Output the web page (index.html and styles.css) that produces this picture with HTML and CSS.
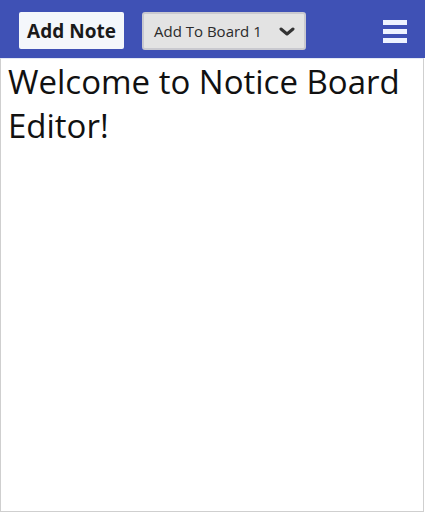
FILE: index.html
```html
<!DOCTYPE html>
<html>
<head>
<meta charset="utf-8">
<link rel="stylesheet" href="styles.css">
</head>
<body>
<header class="topbar">
  <button class="add-note">Add Note</button>
  <div class="board-select">
    <span class="board-label">Add To Board 1</span>
    <svg class="chevron" width="16" height="10" viewBox="0 0 16 10"><path d="M2 2 L8 7 L14 2" fill="none" stroke="#333" stroke-width="3" stroke-linecap="round" stroke-linejoin="round"/></svg>
  </div>
  <div class="menu">
    <span class="bar"></span>
    <span class="bar"></span>
    <span class="bar"></span>
  </div>
</header>
<main class="board">
  <h1 class="welcome">Welcome to Notice Board Editor!</h1>
</main>
</body>
</html>
```
FILE: styles.css
```css
html, body {
  margin: 0;
  padding: 0;
  height: 100%;
}
body {
  font-family: "Open Sans", "Noto Sans", sans-serif;
  background: #ffffff;
  display: flex;
  flex-direction: column;
}
.topbar {
  height: 58px;
  background: #3f51b5;
  display: flex;
  align-items: center;
  padding: 0 18px 0 19px;
  box-sizing: border-box;
  flex-shrink: 0;
}
.add-note {
  font-family: "Open Sans", sans-serif;
  font-weight: 700;
  font-size: 19px;
  color: #1a1a1a;
  background: #f4f7fb;
  border: none;
  border-radius: 2px;
  width: 105px;
  height: 37px;
  padding: 0;
  margin-top: 3px;
}
.board-select {
  margin-left: 18px;
  margin-top: 4px;
  width: 164px;
  height: 38px;
  box-sizing: border-box;
  background: #e3e3e3;
  border: 2px solid #c9c9cf;
  border-radius: 3px;
  display: flex;
  align-items: center;
  justify-content: space-between;
  padding: 0 9px 0 10px;
}
.board-label {
  font-size: 15px;
  color: #2b2b2b;
}
.chevron {
  display: block;
  margin-top: 1px;
}
.menu {
  margin-left: auto;
  display: flex;
  flex-direction: column;
  gap: 4px;
  margin-top: 4px;
}
.bar {
  display: block;
  width: 24px;
  height: 5px;
  background: #eef3ff;
}
.board {
  flex: 1;
  border: 1px solid #cfcfcf;
  border-top-color: #e4e8f4;
  margin: 0 1px 0 0;
  padding: 1px 7px 0 7px;
}
.welcome {
  margin: 0;
  font-size: 33px;
  font-weight: 400;
  color: #111;
  line-height: 44px;
}
```
